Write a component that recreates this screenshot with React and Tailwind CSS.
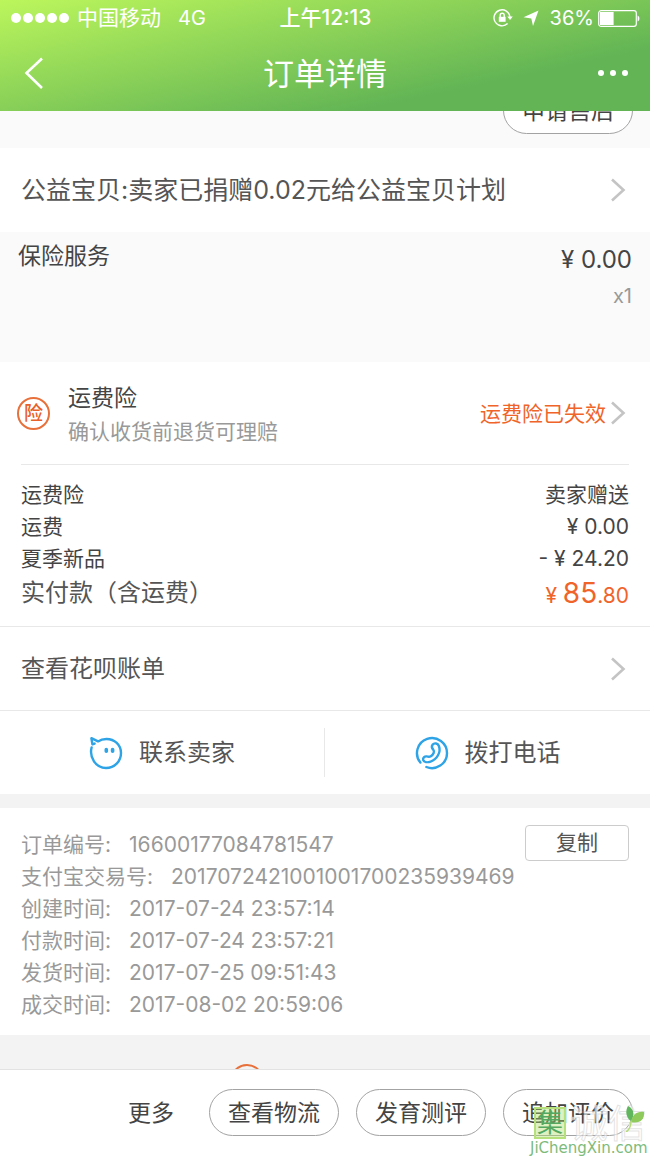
import React from 'react';

const feeRows = [
  { label: '运费险', value: '卖家赠送' },
  { label: '运费', value: '¥ 0.00' },
  { label: '夏季新品', value: '- ¥ 24.20' },
];

const orderInfo = [
  { label: '订单编号:', value: '16600177084781547' },
  { label: '支付宝交易号:', value: '2017072421001001700235939469' },
  { label: '创建时间:', value: '2017-07-24 23:57:14' },
  { label: '付款时间:', value: '2017-07-24 23:57:21' },
  { label: '发货时间:', value: '2017-07-25 09:51:43' },
  { label: '成交时间:', value: '2017-08-02 20:59:06' },
];

const Arrow = () => (
  <svg className="w-4 h-6 shrink-0" viewBox="0 0 16 24" fill="none" stroke="#c4c4c4" strokeWidth="2.6">
    <path d="M2 1.5 L13.5 12 L2 22.5" />
  </svg>
);

const PillButton = ({ children }) => (
  <button className="w-[130px] h-[47px] pt-[2px] shrink-0 rounded-full border border-[#a3a3a3] bg-white text-[23px] text-[#444]">
    {children}
  </button>
);

const StatusBar = () => (
  <div className="grid grid-cols-3 items-center h-9 pl-[11px] pr-[10px] text-[21px]">
    <div className="flex items-center">
      <div className="flex gap-[2px] mr-2">
        {[1, 2, 3, 4, 5].map((n) => (
          <span key={n} className="w-[10px] h-[10px] rounded-full bg-white" />
        ))}
      </div>
      <span className="whitespace-nowrap">中国移动</span>
      <span className="ml-[17px] text-[20px]">4G</span>
    </div>
    <div className="text-center font-medium">上午12:13</div>
    <div className="flex items-center justify-end">
      <svg className="w-5 h-5 mr-[10px]" viewBox="0 0 20 20" fill="none" stroke="white" strokeWidth="1.4">
        <path d="M14.6 15.6 A8 8 0 1 1 17 9" />
        <path d="M14.3 8.4 L19.8 8.4 L17 12 Z" fill="white" stroke="none" />
        <rect x="5.8" y="8.8" width="6.8" height="5" fill="white" stroke="none" />
        <path d="M7.2 9 V7.2 A2 2 0 0 1 11.2 7.2 V9" />
      </svg>
      <svg className="w-4 h-4 mr-[11px]" viewBox="0 0 16 16" fill="white">
        <path d="M15.5 0.5 L10 16 L8.3 8.4 L0.5 7.2 Z" />
      </svg>
      <span className="mr-1 text-[20px]">36%</span>
      <svg className="w-[42px] h-[17px]" viewBox="0 0 42 17" fill="none">
        <rect x="0.7" y="0.7" width="37.6" height="15.6" rx="2.4" stroke="white" strokeWidth="1.2" />
        <rect x="2" y="2" width="13.6" height="13" fill="white" />
        <path d="M39.6 5.5 C42 6.2 42 10.8 39.6 11.5 Z" fill="white" />
      </svg>
    </div>
  </div>
);

const Header = () => (
  <header className="shrink-0 h-[111px] text-white bg-[linear-gradient(168deg,#bcf65c_0%,#62b455_75%)]">
    <StatusBar />
    <div className="flex items-center justify-between h-[74px] px-[22px]">
      <button aria-label="返回" className="w-8">
        <svg className="w-[22px] h-8" viewBox="0 0 22 32" fill="none" stroke="white" strokeWidth="2.6">
          <path d="M20 1.5 L4.5 16 L20 31" />
        </svg>
      </button>
      <h1 className="pt-[2px] text-[31px]">订单详情</h1>
      <button aria-label="更多操作" className="flex justify-end gap-[6px] w-8">
        <span className="w-[6px] h-[6px] rounded-full bg-white" />
        <span className="w-[6px] h-[6px] rounded-full bg-white" />
        <span className="w-[6px] h-[6px] rounded-full bg-white" />
      </button>
    </div>
  </header>
);

const Contact = () => (
  <section className="grid grid-cols-2 divide-x divide-[#e8e8e8] py-[17px] bg-white border-t border-[#e8e8e8] text-[24px] text-[#555]">
    <button className="flex items-center justify-center gap-4 h-[49px]">
      <svg className="w-[34px] h-[34px]" viewBox="0 0 34 34" fill="none" stroke="#2ea3e6" strokeWidth="2.4" strokeLinecap="round" strokeLinejoin="round">
        <path d="M2.6 11.5 C0.2 21 6.5 32 17 32 C25.5 32 32 25.3 32 17 C32 8.8 25.5 3 17.5 3 C14 3 11.2 3.9 9 5.4 L2.4 2.2 L3.4 8.4 L5.6 7.6" />
        <path d="M17.3 13.6 V15.2 M23.6 13.6 V15.2" strokeWidth="3.6" />
      </svg>
      联系卖家
    </button>
    <button className="flex items-center justify-center gap-4 h-[49px]">
      <svg className="w-[34px] h-[34px]" viewBox="0 0 34 34" fill="none" stroke="#2ea3e6" strokeWidth="2.4" strokeLinecap="round" strokeLinejoin="round">
        <path d="M5.4 26.6 A15 15 0 1 1 11.4 31" />
        <path d="M17.6 8.6 C19.5 6.6 22.8 7.2 23.9 10 C26.2 16 22 23.6 15.6 25.6 C12.4 26.7 9 26.2 8.2 24 C7.5 21.9 9.5 20.2 11.6 20.4 C13.3 20.6 14.2 21.3 15.8 20.2 C18.6 18.3 19.8 15.6 18.3 13.8 C17 12.3 16.4 10.2 17.6 8.6 Z" />
      </svg>
      拨打电话
    </button>
  </section>
);

// site stamp in the corner, lies over the last button
const Watermark = () => (
  <div className="absolute right-0 bottom-0 w-[120px] pointer-events-none" aria-hidden="true">
    <div className="flex items-center gap-1 pl-1 h-[34px]">
      <span className="flex items-center justify-center w-8 h-8 bg-[#a9dc6a]/40 border-2 border-[#b5e07c] text-[26px] leading-none text-[#55a860]">集</span>
      <span className="text-[38px] leading-[34px] text-white/60 [-webkit-text-stroke:1px_rgba(200,200,200,0.5)]">诚信</span>
    </div>
    <svg className="absolute right-1 top-0 w-5 h-[26px]" viewBox="0 0 20 26">
      <path d="M2 0 C8 3 9 9 5 15 C0 12 -1 5 2 0 Z" fill="#5fb65c" />
      <path d="M18 6 C19 14 13 18 5 16 C6 9 11 5 18 6 Z" fill="#8ecb5c" />
      <path d="M5 15 C5 20 3 24 0 26" fill="none" stroke="#b3dc78" strokeWidth="1.5" />
    </svg>
    <p className="font-['DejaVu_Sans'] text-[15px] leading-4 whitespace-nowrap text-[#7dbb7b]">JiChengXin.com</p>
  </div>
);

const App = () => {
  return (
    <div className="flex flex-col h-screen bg-[#f3f3f3] font-['Inter','Noto_Sans_CJK_SC',sans-serif] text-[#444]">
      <Header />

      <main className="flex-1 min-h-0 overflow-hidden">
        {/* scrolled a little, so the first button is cut by the header */}
        <div className="-mt-6 flex justify-end h-[61px] pr-[17px] bg-[#fafafa]">
          <PillButton>申请售后</PillButton>
        </div>

        <a href="#donation" className="flex items-center justify-between h-[84px] pl-[21px] pr-6 bg-white text-[24px] text-[#555]">
          <span className="pt-[2px] text-[25px]">公益宝贝:卖家已捐赠0.02元给公益宝贝计划</span>
          <Arrow />
        </a>

        <section className="flex justify-between h-[130px] px-[18px] pt-2 bg-[#fafafa]">
          <h2 className="text-[23px] leading-8">保险服务</h2>
          <div className="text-right">
            <p className="text-[24px] leading-10">¥ 0.00</p>
            <p className="text-[20px] leading-8 text-[#999]">x1</p>
          </div>
        </section>

        <section className="bg-white">
          <a href="#insurance" className="flex items-center h-[102px] pl-[17px] pr-6">
            <span className="flex items-center justify-center w-[33px] h-[33px] rounded-full border-2 border-[#e8703a] text-[19px] leading-none font-medium text-[#e8602a]">险</span>
            <div className="flex-1 ml-[18px] pt-[3px]">
              <p className="text-[23px] leading-[33px]">运费险</p>
              <p className="text-[21px] leading-[33px] text-[#999]">确认收货前退货可理赔</p>
            </div>
            <span className="mr-1 pt-[2px] text-[21px] text-[#f0642a]">运费险已失效</span>
            <Arrow />
          </a>
          <dl className="mx-[21px] pt-[14px] pb-3 border-t border-[#e8e8e8] text-[21px] leading-8">
            {feeRows.map((row) => (
              <div key={row.label} className="flex justify-between">
                <dt>{row.label}</dt>
                <dd>{row.value}</dd>
              </div>
            ))}
            <div className="flex justify-between leading-9">
              <dt className="text-[24px] text-[#555]">实付款（含运费）</dt>
              <dd className="text-[#f0642a]">¥ <span className="text-[28px]">85</span>.80</dd>
            </div>
          </dl>
        </section>

        <a href="#bill" className="flex items-center justify-between h-[84px] pl-[21px] pr-6 bg-white border-t border-[#e8e8e8] text-[24px] text-[#555]">
          查看花呗账单
          <Arrow />
        </a>

        <Contact />

        <section className="flex items-start justify-between mt-[14px] pt-[17px] pb-[14px] px-[21px] bg-white">
          <dl className="pt-1 text-[21px] leading-8 text-[#999]">
            {orderInfo.map((row) => (
              <div key={row.label} className="flex gap-[18px] whitespace-nowrap">
                <dt>{row.label}</dt>
                <dd>{row.value}</dd>
              </div>
            ))}
          </dl>
          <button className="w-[104px] h-9 shrink-0 rounded-sm border border-[#ccc] bg-white text-[21px] leading-8 text-[#555]">复制</button>
        </section>

        <div className="pt-[29px] pl-[230px]">
          <div className="w-[34px] h-[34px] rounded-full border-2 border-[#e8703a]" />
        </div>
      </main>

      <footer className="relative shrink-0 flex items-start justify-end gap-[17px] h-[87px] pt-[19px] pr-[17px] bg-white border-t border-[#e2e2e2]">
        <button className="h-[47px] pt-[2px] mr-[18px] text-[23px]">更多</button>
        <PillButton>查看物流</PillButton>
        <PillButton>发育测评</PillButton>
        <PillButton>追加评价</PillButton>
        <Watermark />
      </footer>
    </div>
  );
};

export default App;
